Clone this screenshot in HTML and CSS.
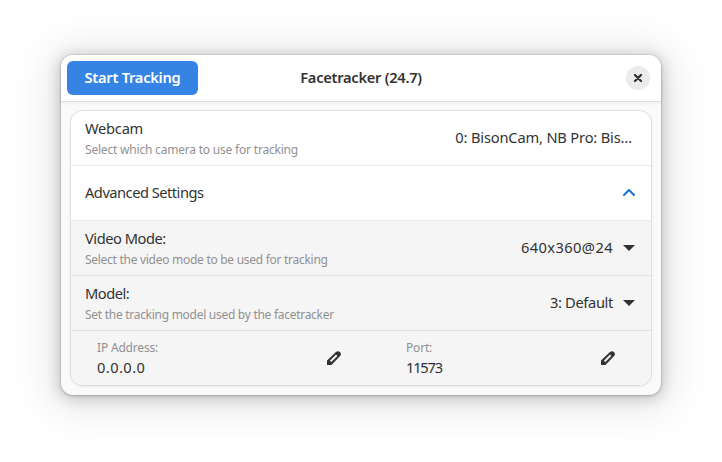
FILE: index.html
```
<!DOCTYPE html>
<html lang="en">
<head>
<meta charset="utf-8">
<title>Facetracker</title>
<link rel="stylesheet" href="styles.css">
</head>
<body>
<main class="window">
  <header class="header">
    <button class="start">Start Tracking</button>
    <h1 class="title">Facetracker (24.7)</h1>
    <button class="close" aria-label="Close"><svg width="16" height="16" viewBox="0 0 16 16"><path d="M5 5l6 6M11 5l-6 6" fill="none" stroke="currentColor" stroke-width="2.3" stroke-linecap="round"/></svg></button>
  </header>
  <section class="card">
    <div class="row">
      <div class="labels"><div class="name webcam">Webcam</div><div class="sub webcam-sub">Select which camera to use for tracking</div></div>
      <div class="value camera">0: BisonCam, NB Pro: Bis…</div>
    </div>
    <div class="row">
      <div class="name advanced">Advanced Settings</div>
      <svg class="icon chevron" viewBox="0 0 16 16"><path d="M3 10l5-5 5 5" fill="none" stroke="currentColor" stroke-width="2" stroke-linecap="round" stroke-linejoin="round"/></svg>
    </div>
    <div class="row nested">
      <div class="labels"><div class="name">Video Mode:</div><div class="sub">Select the video mode to be used for tracking</div></div>
      <div class="value mode">640x360@24</div>
      <svg class="icon" viewBox="0 0 16 16"><path d="M2 5h12l-6 6z" fill="currentColor"/></svg>
    </div>
    <div class="row nested">
      <div class="labels"><div class="name">Model:</div><div class="sub">Set the tracking model used by the facetracker</div></div>
      <div class="value model">3: Default</div>
      <svg class="icon" viewBox="0 0 16 16"><path d="M2 5h12l-6 6z" fill="currentColor"/></svg>
    </div>
    <div class="row nested entries">
      <div class="entry ip">
        <div class="texts"><div class="sub">IP Address:</div><div class="name">0.0.0.0</div></div>
        <svg class="pencil" viewBox="0 0 16 16"><path d="M1 10.5L10.2 1.8C12.6-.3 16.6 3.2 14.3 5.8L5.5 15H1zM3.9 10.7L5.3 12.1L11.4 6L10 4.6z" fill="currentColor" fill-rule="evenodd"/></svg>
      </div>
      <div class="entry port">
        <div class="texts"><div class="sub">Port:</div><div class="name">11573</div></div>
        <svg class="pencil" viewBox="0 0 16 16"><path d="M1 10.5L10.2 1.8C12.6-.3 16.6 3.2 14.3 5.8L5.5 15H1zM3.9 10.7L5.3 12.1L11.4 6L10 4.6z" fill="currentColor" fill-rule="evenodd"/></svg>
      </div>
    </div>
  </section>
</main>
</body>
</html>
```
FILE: styles.css
```
* { box-sizing: border-box; }
body {
  margin: 0;
  padding: 55px 61px 67px;
  background: #fff;
  color: #323232;
  font: 14.67px/20px "Noto Sans", sans-serif;
}
.window {
  width: 600px;
  height: 340px;
  border-radius: 12px;
  background: #fafafa;
  box-shadow: 0 0 0 1px rgba(0,0,0,.05), 0 1px 3px rgba(0,0,0,.18), 0 2px 14px 3px rgba(0,0,0,.16), 0 4px 42px 12px rgba(0,0,0,.09);
}
.header {
  display: grid;
  grid-template-columns: 1fr auto 1fr;
  align-items: center;
  height: 46px;
  padding: 0 11px 0 6px;
  border-radius: 12px 12px 0 0;
  background: #fff;
  box-shadow: 0 1px #dedede, 0 2px 4px rgba(0,0,0,.06);
}
button { padding: 0; border: 0; font: inherit; color: inherit; }
.start {
  width: 131px;
  height: 34px;
  padding-bottom: 2px;
  border-radius: 6px;
  background: #3584e4;
  color: #fff;
  font-weight: 600;
  letter-spacing: -.25px;
}
.title {
  margin: 0 0 0 5px;
  padding-bottom: 2px;
  font-size: inherit;
  font-weight: 600;
  letter-spacing: -.27px;
}
.close {
  display: grid;
  place-items: center;
  justify-self: end;
  width: 24px;
  height: 24px;
  border-radius: 50%;
  background: #ebebeb;
}
.card {
  width: 580px;
  margin: 10px auto 0;
  overflow: hidden;
  border-radius: 12px;
  background: #fff;
  box-shadow: 0 0 0 1px rgba(0,0,0,.07), 0 1px 3px 1px rgba(0,0,0,.06);
}
.row {
  display: flex;
  align-items: center;
  height: 55px;
  padding: 0 14px;
  border-bottom: 1px solid #ebebeb;
}
.row:last-child { height: 54px; border-bottom: 0; }
.nested { background: #f5f5f5; border-color: #e1e1e1; }
.labels { padding-top: 2px; }
.name { letter-spacing: -.47px; white-space: nowrap; }
.webcam { letter-spacing: -.25px; }
.advanced { padding-bottom: 2px; letter-spacing: -.5px; }
.sub {
  color: #919191;
  font-size: 12px;
  line-height: 23px;
  letter-spacing: -.28px;
  white-space: nowrap;
}
.webcam-sub { letter-spacing: -.2px; }
.value { margin-left: auto; padding-bottom: 2px; white-space: nowrap; }
.camera { margin-right: 5px; letter-spacing: -.17px; }
.mode { letter-spacing: .4px; }
.model { letter-spacing: -.35px; }
.icon { width: 16px; height: 16px; margin-left: 8px; }
.chevron { margin-left: auto; color: #1c71d8; }
.entries { padding: 0 26px; }
.entry { display: flex; align-items: center; justify-content: space-between; }
.texts { padding-bottom: 2px; }
.entry .sub { line-height: 20px; letter-spacing: -.18px; }
.entry .name { line-height: 18px; }
.ip { width: 245px; }
.ip .name { letter-spacing: .43px; }
.port { width: 210px; margin-left: 64px; }
.port .name { letter-spacing: -1.2px; }
.pencil { width: 16px; height: 16px; }
```
